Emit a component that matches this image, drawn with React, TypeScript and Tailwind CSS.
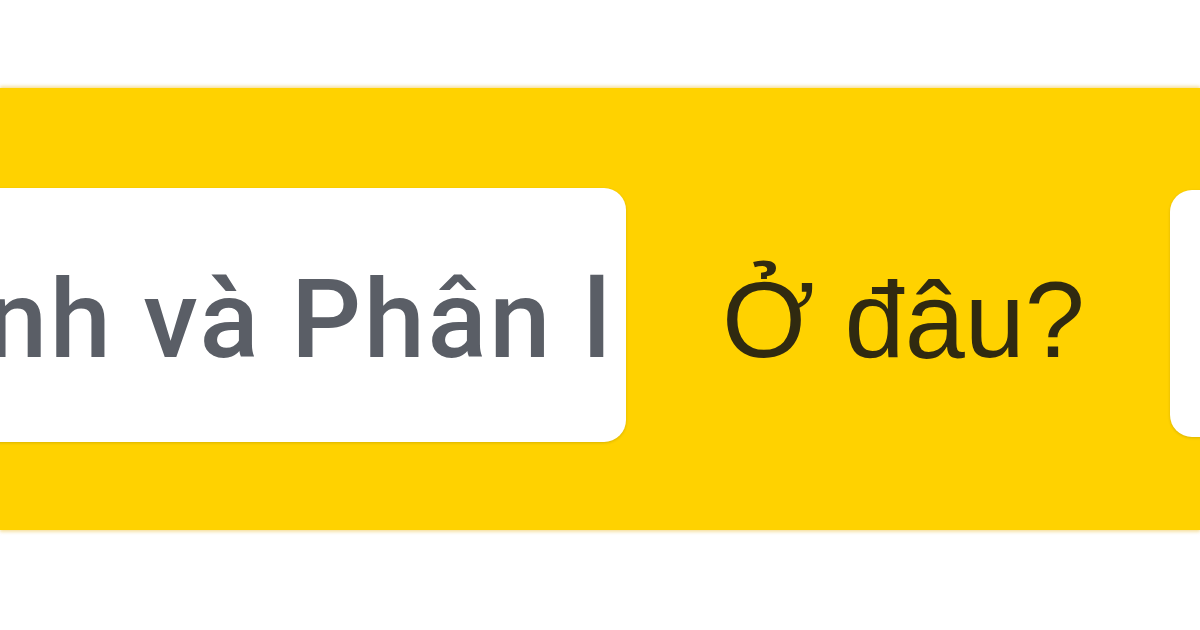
export default function App() {
  return (
    <div className="h-[630px] w-[1200px] overflow-hidden bg-white font-['Liberation_Sans',Arial,sans-serif]">
      <div className="mt-[88px] flex h-[442px] items-start bg-[#ffd200] shadow-[0_-2px_3px_rgba(240,200,80,0.5),0_2px_3px_rgba(240,200,80,0.5)]">
        <div className="-ml-[60px] mt-[100px] flex h-[254px] w-[686px] shrink-0 items-start overflow-hidden rounded-[22px] bg-white pt-[77px] shadow-[0_1px_3px_rgba(0,0,0,0.15)]">
          <span className="whitespace-nowrap pl-[46px] font-['Roboto',Arial,sans-serif] text-[110px] font-medium leading-none tracking-[2.5px] text-[#5a5e66]">
            nh và Phân l
          </span>
        </div>
        <span className="ml-[96px] mt-[178px] shrink-0 whitespace-nowrap text-[108px] leading-none text-[#302a10]">
          Ở đâu?
        </span>
        <div className="ml-auto mr-[-60px] mt-[102px] h-[247px] w-[90px] shrink-0 rounded-[22px] bg-white shadow-[0_1px_3px_rgba(0,0,0,0.15)]" />
      </div>
    </div>
  );
}
